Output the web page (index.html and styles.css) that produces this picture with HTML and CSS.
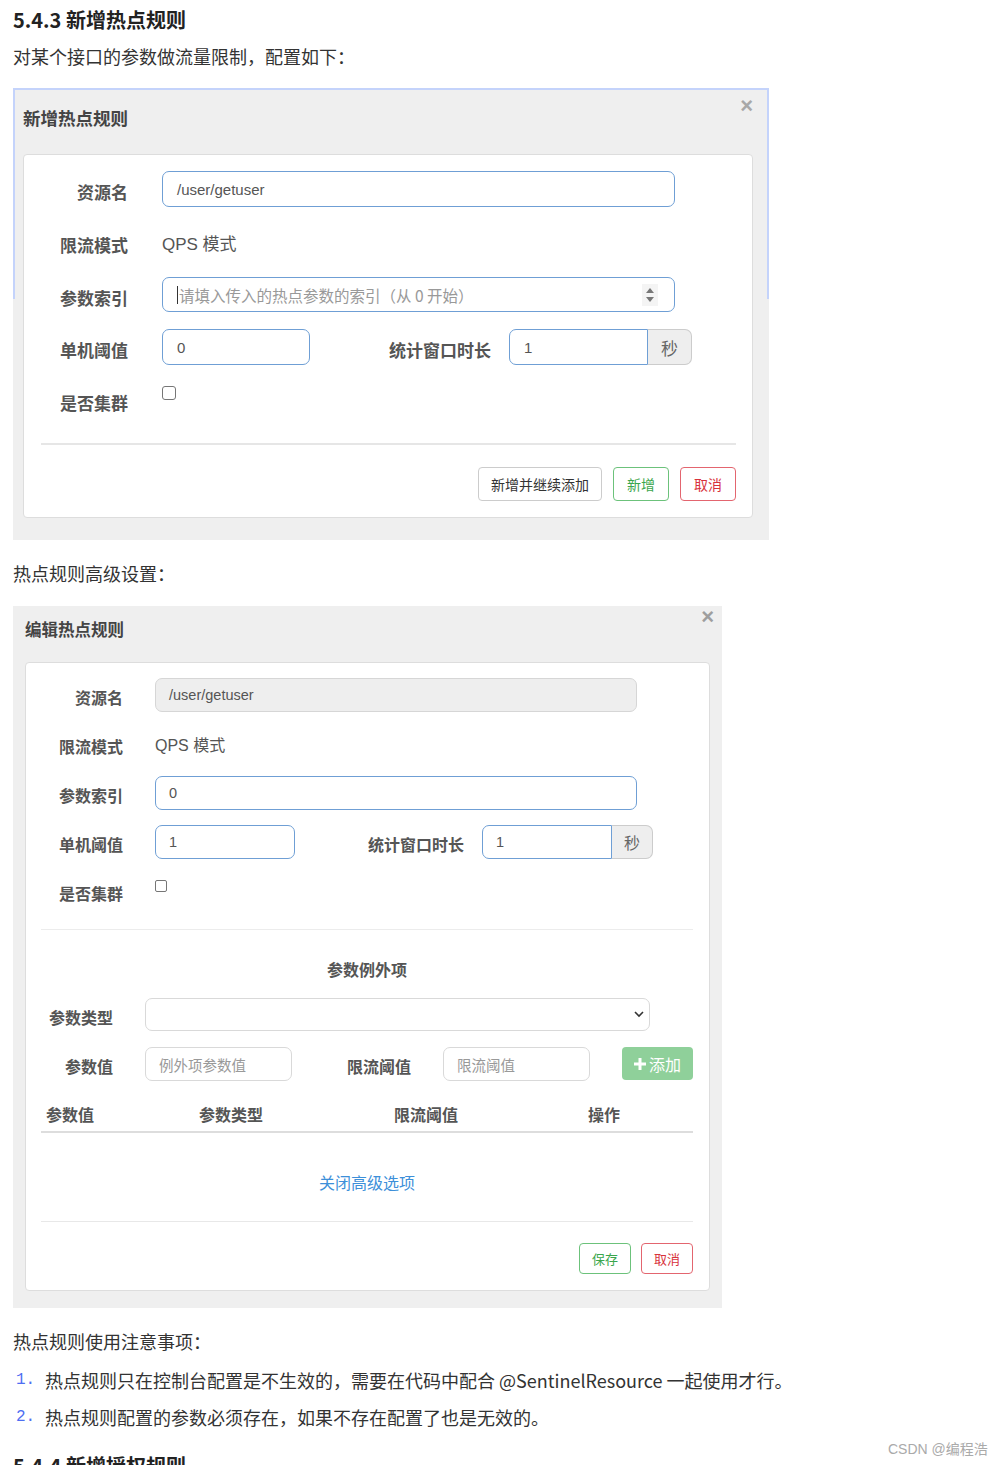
FILE: index.html
```html
<!DOCTYPE html>
<html lang="zh-CN">
<head>
<meta charset="utf-8">
<title>5.4.3 新增热点规则</title>
<link rel="stylesheet" href="styles.css">
</head>
<body>
<div class="article">
  <h3 class="sec">5.4.3 新增热点规则</h3>
  <p class="para p1">对某个接口的参数做流量限制，配置如下：</p>

  <div class="shot shot1">
    <div class="dlg-head head1">
      <span class="dlg-title">新增热点规则</span>
      <span class="close">×</span>
    </div>
    <div class="card card1">
      <div class="form f1">
        <div class="row">
          <span class="lbl">资源名</span>
          <span class="inp blue w513">/user/getuser</span>
        </div>
        <div class="row">
          <span class="lbl">限流模式</span>
          <span class="val">QPS 模式</span>
        </div>
        <div class="row r35">
          <span class="lbl">参数索引</span>
          <span class="inp blue w513 sel">
            <span class="ph"><span class="cursor"></span>请填入传入的热点参数的索引（从 0 开始）</span>
            <span class="spin"><svg width="10" height="16" viewBox="0 0 10 16"><path d="M5 1 L9 6 L1 6 Z" fill="#777"/><path d="M5 15 L9 10 L1 10 Z" fill="#777"/></svg></span>
          </span>
        </div>
        <div class="row">
          <span class="lbl">单机阈值</span>
          <span class="inp blue w148">0</span>
          <span class="lbl lbl-win">统计窗口时长</span>
          <span class="group">
            <span class="inp blue g-in w139">1</span>
            <span class="addon w44">秒</span>
          </span>
        </div>
        <div class="row top">
          <span class="lbl mid">是否集群</span>
          <span class="chk"></span>
        </div>
      </div>
      <div class="hr hr1"></div>
      <div class="btns btns1">
        <span class="btn">新增并继续添加</span>
        <span class="btn btn-g">新增</span>
        <span class="btn btn-r">取消</span>
      </div>
    </div>
  </div>

  <p class="para p2">热点规则高级设置：</p>

  <div class="shot shot2">
    <div class="dlg-head head2">
      <span class="dlg-title">编辑热点规则</span>
      <span class="close close2">×</span>
    </div>
    <div class="card card2">
      <div class="form f2">
        <div class="row">
          <span class="lbl">资源名</span>
          <span class="inp dis w482">/user/getuser</span>
        </div>
        <div class="row">
          <span class="lbl">限流模式</span>
          <span class="val">QPS 模式</span>
        </div>
        <div class="row">
          <span class="lbl">参数索引</span>
          <span class="inp blue w482">0</span>
        </div>
        <div class="row">
          <span class="lbl">单机阈值</span>
          <span class="inp blue w140">1</span>
          <span class="lbl lbl-win2">统计窗口时长</span>
          <span class="group">
            <span class="inp blue g-in w130">1</span>
            <span class="addon w41">秒</span>
          </span>
        </div>
        <div class="row top">
          <span class="lbl mid">是否集群</span>
          <span class="chk chk2"></span>
        </div>
      </div>
      <div class="hr hr2"></div>
      <div class="ex-title">参数例外项</div>
      <div class="row ex-row ex-sel">
        <span class="lbl">参数类型</span>
        <span class="inp gray w505 select">
          <svg width="10" height="7" viewBox="0 0 10 7"><path d="M1 1 L5 5 L9 1" fill="none" stroke="#333" stroke-width="1.6"/></svg>
        </span>
      </div>
      <div class="row ex-row ex-val">
        <span class="lbl">参数值</span>
        <span class="inp gray w147 ph2">例外项参数值</span>
        <span class="lbl lbl-lim">限流阈值</span>
        <span class="inp gray w147 ph2">限流阈值</span>
        <span class="btn-add"><svg width="12" height="12" viewBox="0 0 12 12"><rect x="4.5" y="0" width="3" height="12" fill="#fff"/><rect x="0" y="4.5" width="12" height="3" fill="#fff"/></svg>添加</span>
      </div>
      <div class="thead">
        <span>参数值</span>
        <span>参数类型</span>
        <span>限流阈值</span>
        <span>操作</span>
      </div>
      <div class="link">关闭高级选项</div>
      <div class="hr hr3"></div>
      <div class="btns btns2">
        <span class="btn btn-g sm">保存</span>
        <span class="btn btn-r sm">取消</span>
      </div>
    </div>
  </div>

  <p class="para p3">热点规则使用注意事项：</p>
  <div class="li li1"><span class="num">1.</span><span>热点规则只在控制台配置是不生效的，需要在代码中配合 @SentinelResource 一起使用才行。</span></div>
  <div class="li li2"><span class="num">2.</span><span>热点规则配置的参数必须存在，如果不存在配置了也是无效的。</span></div>
  <h3 class="sec sec2">5.4.4 新增授权规则</h3>
</div>
<div class="csdn">CSDN @编程浩</div>
</body>
</html>
```

FILE: styles.css
```css
*, *::before, *::after { box-sizing: border-box; margin: 0; padding: 0; }
html, body { background: #fff; }
body {
  font-family: "Noto Sans CJK SC", "Microsoft YaHei", sans-serif;
  color: #333;
  position: relative;
  overflow: hidden;
  height: 1465px;
}
.article { padding: 0 13px; }

.sec { font-size: 20px; font-weight: 700; line-height: 28px; margin-top: 6px; color: #222; }
.sec2 { margin-top: 21px; }
.para { font-size: 18px; line-height: 28px; color: #333; }
.p1 { margin-top: 8px; }
.p2 { margin-top: 19px; }
.p3 { margin-top: 19px; }

.li { display: flex; font-size: 18px; line-height: 28px; color: #333; }
.li1 { margin-top: 11px; }
.li2 { margin-top: 9px; }
.num { width: 32px; padding-left: 3px; color: #4e6ef2; font-family: "Liberation Mono", monospace; font-size: 16px; }
.li span:last-child { font-family: "Noto Sans CJK SC", sans-serif; }

/* screenshots */
.shot { background: #efefef; position: relative; }
.shot1 { width: 756px; margin-top: 18px; padding: 0 16px 22px 10px; }
.shot1::before {
  content: ""; position: absolute; left: 0; top: 0;
  width: 756px; height: 211px;
  border: 2px solid #c4d3fb; border-bottom: none;
  pointer-events: none;
}
.shot2 { width: 709px; margin-top: 19px; padding: 0 12px 17px 12px; }

.dlg-head { display: flex; justify-content: space-between; align-items: flex-start; }
.head1 { height: 66px; }
.head2 { height: 56px; }
.dlg-title { font-size: 17.5px; font-weight: 700; color: #444; line-height: 24px; }
.head1 .dlg-title { margin-top: 18px; }
.head2 .dlg-title { margin-top: 11px; font-size: 16.5px; }
.close {
  font-family: "Liberation Sans", sans-serif; font-weight: 700; font-size: 22px;
  line-height: 20px; color: #a8a8a8;
}
.head1 .close { margin-top: 8px; margin-right: 0; }
.close2 { margin-top: 1px; margin-right: -4px; color: #9e9e9e; }

.card { background: #fff; border: 1px solid #ddd; border-radius: 4px; }
.card1 { padding: 16px 16px 16px 17px; }
.card2 { padding: 15px 16px 16px 15px; }

.form { display: flex; flex-direction: column; }
.f1 { gap: 17px; }
.f2 { gap: 15px; }

.row { display: flex; align-items: center; }
.f1 .row { height: 36px; }
.f1 .row.r35 { height: 35px; }
.f2 .row { height: 34px; }
.row.top { align-items: flex-start; }

.lbl {
  text-align: right; font-weight: 700; color: #555; line-height: 24px;
  flex: none; white-space: nowrap;
}
.f1 .lbl { width: 87px; margin-right: 34px; font-size: 17px; padding-top: 6px; }
.f2 .lbl { width: 82px; margin-right: 32px; font-size: 16px; padding-top: 4px; }
.lbl.mid { align-self: center; }

.val { font-family: "Liberation Sans", "Noto Sans CJK SC", sans-serif; color: #555; line-height: 24px; }
.f1 .val { font-size: 17px; padding-top: 6px; }
.f2 .val { font-size: 16px; padding-top: 4px; }

.inp {
  display: flex; align-items: center; flex: none;
  border: 1px solid #ccc; border-radius: 7px; background: #fff;
  font-family: "Liberation Sans", "Noto Sans CJK SC", sans-serif;
  color: #555;
}
.f1 .inp { height: 36px; padding: 0 14px; font-size: 15px; }
.f1 .r35 .inp { height: 35px; }
.f2 .inp { height: 34px; padding: 0 13px; font-size: 14.5px; }
.blue { border-color: #6f9fd5; }
.dis { background: #eee; border-color: #d6d6d6; }
.gray { border-color: #d9d9d9; }

.w513 { width: 513px; }
.w148 { width: 148px; }
.w139 { width: 139px; }
.w482 { width: 482px; }
.w140 { width: 140px; }
.w130 { width: 130px; }
.w505 { width: 505px; }
.w147 { width: 147px; }
.w44 { width: 44px; }
.w41 { width: 41px; }

.sel { justify-content: space-between; padding-right: 16px !important; }
.ph { color: #999; font-size: 15.5px; display: flex; align-items: center; font-family: "Noto Sans CJK SC", sans-serif; }
.cursor { display: inline-block; width: 1px; height: 18px; background: #333; margin-right: 1px; }
.spin { display: flex; align-items: center; justify-content: center; width: 16px; height: 22px; background: #f4f4f4; }

.lbl-win { width: 104px !important; margin-left: 79px; margin-right: 16px !important; text-align: left !important; }
.lbl-win2 { width: 98px !important; margin-left: 73px; margin-right: 16px !important; text-align: left !important; font-size: 16px; }

.group { display: flex; flex: none; }
.g-in { border-top-right-radius: 0; border-bottom-right-radius: 0; }
.addon {
  display: flex; align-items: center; justify-content: center;
  background: #eee; border: 1px solid #ccc; border-left: none;
  border-radius: 0 7px 7px 0; color: #666;
  font-family: "Noto Sans CJK SC", sans-serif;
}
.f1 .addon { height: 36px; font-size: 17px; }
.f2 .addon { height: 34px; font-size: 16px; }

.chk { width: 14px; height: 14px; border: 1px solid #767676; border-radius: 3px; margin-top: 4px; background: #fff; flex: none; }
.chk2 { width: 12px; height: 12px; border-radius: 2px; margin-top: 6px; }

.hr { background: #e6e6e6; }
.hr1 { height: 2px; margin-top: 25px; }
.hr2 { height: 1px; margin-top: 21px; background: #ececec; }
.hr3 { height: 1px; margin-top: 27px; background: #e8e8e8; }

.btns { display: flex; justify-content: flex-end; }
.btns1 { gap: 11px; margin-top: 22px; }
.btns2 { gap: 10px; margin-top: 21px; }
.btn {
  display: flex; align-items: center; justify-content: center;
  height: 34px; padding: 0 13px; border: 1px solid #ccc; border-radius: 4px;
  background: #fff; font-size: 14px; color: #333;
}
.btns1 .btn:first-child { padding: 0 12px; }
.btn.sm { height: 31px; font-size: 13px; padding: 0 12px; }
.btn-g { border-color: #6cc27b; color: #3aa64c; }
.btn-r { border-color: #e3656f; color: #d8323c; }

.ex-title { text-align: center; font-size: 16px; font-weight: 700; color: #555; line-height: 24px; margin-top: 27px; }
.ex-row { height: 34px; }
.ex-row .lbl { width: 72px; margin-right: 32px; font-size: 16px; padding-top: 4px; }
.ex-sel { margin-top: 17px; height: 33px; }
.ex-val { margin-top: 16px; }
.ex-row .inp { height: 34px; padding: 0 13px; font-size: 14.5px; }
.ex-sel .inp { height: 33px; }
.select { justify-content: flex-end; padding-right: 5px !important; }
.ph2 { color: #999; font-family: "Noto Sans CJK SC", sans-serif; }
.ex-row .lbl.lbl-lim { width: 65px; margin-left: 54px; margin-right: 32px; }
.btn-add {
  display: flex; align-items: center; justify-content: center; gap: 3px;
  width: 72px; height: 33px; margin-left: 32px; margin-top: -1px;
  background: #8fd09a; border-radius: 4px; color: #fff; font-size: 16px;
}

.thead {
  display: grid; grid-template-columns: 153px 195px 194px 111px;
  margin-top: 16px; height: 36px; border-bottom: 2px solid #ddd;
}
.thead span { padding-left: 5px; font-size: 16px; font-weight: 700; color: #555; line-height: 34px; }

.link { text-align: center; color: #3d8fd9; font-size: 16px; line-height: 24px; margin-top: 37px; }

.csdn {
  position: absolute; left: 888px; top: 1438px;
  font-family: "Liberation Sans", "Noto Sans CJK SC", sans-serif;
  font-size: 14px; line-height: 22px; color: #aaa;
}
```
